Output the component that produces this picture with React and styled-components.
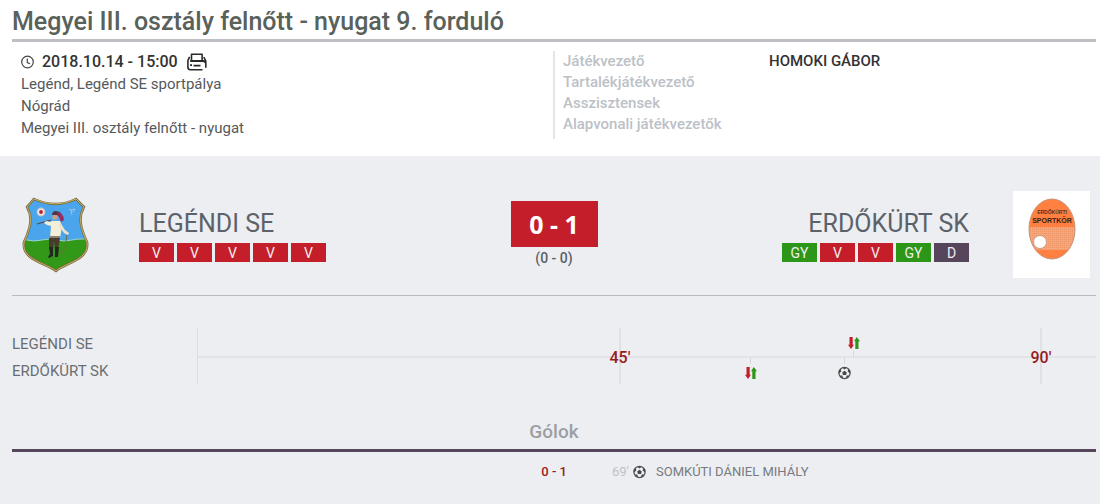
import React from 'react'
import styled, { createGlobalStyle } from 'styled-components'

const GlobalStyle = createGlobalStyle`
	* {
		box-sizing: border-box;
	}
	body {
		margin: 0;
		background-color: #edeef2;
		color: #5b6068;
		font-family: Roboto, "Liberation Sans", sans-serif;
	}
	h1, h2, h3, p, ul, dl, dd {
		margin: 0;
		padding: 0;
	}
	ul {
		list-style: none;
	}
`

const colors = {
	V: '#c41e2a',
	GY: '#2b9618',
	D: '#57455c',
}

const MatchHeader = styled.header`
	padding: 0 4px 17px 12px;
	background-color: #fff;
`
const Title = styled.h1`
	height: 42px;
	border-bottom: 3px solid #bfc0c5;
	color: #59615b;
	font-size: 25px;
	font-weight: 500;
	line-height: 43px;
`
const HeaderColumns = styled.div`
	display: grid;
	grid-template-columns: 1fr 1fr;
	padding-top: 9px;
`
const MatchInfo = styled.div`
	padding-left: 9px;
	color: #56595c;
	font-size: 15px;
	line-height: 22px;
`
const DateRow = styled.div`
	display: flex;
	align-items: center;
	gap: 8px;
	color: #333;

	& time {
		font-size: 16px;
		font-weight: 500;
	}
`
const Officials = styled.dl`
	display: grid;
	grid-template-columns: 206px 1fr;
	align-content: start;
	margin-left: -1px;
	padding-left: 8px;
	border-left: 2px solid #e4e5e8;
	font-size: 15px;
	font-weight: 500;
	line-height: 21px;

	& dt {
		color: #bcc1c7;
	}
	& dd {
		color: #333;
	}
`
const MatchBody = styled.main`
	padding: 0 4px 0 12px;
`
const Scoreboard = styled.section`
	display: grid;
	grid-template-columns: 1fr auto 1fr;
	height: 140px;
	border-bottom: 1px solid #b9bac1;
`
const Team = styled.div`
	display: flex;
	flex-direction: ${props => props.$away ? 'row-reverse' : 'row'};
	align-items: flex-start;
	gap: ${props => props.$away ? '44px' : '42px'};
	padding: ${props => props.$away ? '35px 6px 0 0' : '35px 0 0'};
`
const TeamText = styled.div`
	padding-top: 14px;
	text-align: ${props => props.$away ? 'right' : 'left'};

	& h2 {
		color: #5b6269;
		font-size: 25px;
		font-weight: 400;
		line-height: 38px;
		white-space: nowrap;
	}
`
const Form = styled.ul`
	display: flex;
	gap: 3px;
`
const FormItem = styled.li`
	width: 35px;
	height: 19px;
	background-color: ${props => colors[props.$result]};
	color: #f4eef0;
	font-size: 14px;
	line-height: 20px;
	text-align: center;
`
const Score = styled.div`
	padding-top: 45px;
	text-align: center;

	& strong {
		display: block;
		width: 87px;
		height: 46px;
		background-color: #c41e2a;
		color: #fff;
		font: 700 25px/47px "Noto Sans", sans-serif;
	}
	& span {
		font-size: 14px;
		font-weight: 500;
		line-height: 22px;
	}
`
const LogoBox = styled.div`
	display: flex;
	justify-content: center;
	width: 77px;
	height: 87px;
	background-color: #fff;
`
const TimelineSection = styled.section`
	display: grid;
	grid-template-columns: 185px 1fr;
	padding-top: 32px;
`
const TimelineTeams = styled.div`
	padding-top: 3px;
	color: #6a6e73;
	font-size: 15px;
	line-height: 27px;
`
const Track = styled.div`
	position: relative;
	height: 56px;
	border-left: 1px solid #dcdde0;

	&::before {
		content: '';
		position: absolute;
		top: 28px;
		left: 0;
		right: 0;
		height: 2px;
		background-color: #e2e3e6;
	}
`
const Mark = styled.div`
	position: absolute;
	top: 0;
	display: flex;
	justify-content: center;
	width: 24px;
	height: 56px;
	margin-left: -11px;
	background: linear-gradient(#e0e1e4, #e0e1e4) center / 2px 100% no-repeat;
	color: #981b20;
	font-size: 16px;
	font-weight: 500;
	line-height: 60px;
`
const Event = styled.div`
	position: absolute;
	top: ${props => props.$away ? '30px' : '8px'};
	display: flex;
	flex-direction: ${props => props.$away ? 'column' : 'column-reverse'};
	align-items: center;
	gap: ${props => props.$away ? '2px' : '1px'};
	width: 14px;
	margin-left: -6px;

	&::before {
		content: '';
		width: 1px;
		height: 6px;
		background-color: #d5d6d9;
	}
	& svg {
		display: block;
	}
`
const Goals = styled.section`
	padding-top: 30px;

	& h3 {
		height: 37px;
		border-bottom: 3px solid #57475d;
		color: #9b9fa4;
		font-size: 19px;
		font-weight: 500;
		line-height: 33px;
		text-align: center;
	}
`
const GoalRow = styled.div`
	display: grid;
	grid-template-columns: 1fr 1fr;
	align-items: center;
	padding: 9px 0 0 26px;
	color: #777b80;
	font-size: 13px;
	line-height: 22px;
`
const GoalScore = styled.div`
	text-align: right;
	color: #981b20;
	font-weight: 500;
`
const Scorer = styled.div`
	display: flex;
	align-items: center;
	padding-left: 45px;

	& time {
		width: 21px;
		color: #bcc1c7;
	}
	& span {
		padding-left: 10px;
	}
`

const ClockIcon = () => (
	<svg width="13" height="22" viewBox="0 0 13 22" fill="none" stroke="#444" strokeWidth="1.2">
		<circle cx="6.5" cy="11" r="5.8" />
		<path d="M6.3 7.4v4.2l2.7 1.2" />
	</svg>
)

const PrinterIcon = () => (
	<svg width="22" height="18" viewBox="0 0 22 18" fill="none" stroke="#2a2a2a" strokeWidth="1.6" strokeLinejoin="round">
		<path d="M5.5 7.5V1.2h10.6v6.3" />
		<path d="M3.6 3.8L1.9 7.6V14q0 2.7 2.6 2.7h12M17.8 4.2l2 4v6.6" />
		<path d="M4.2 8h13.6l1.4 1.4" strokeWidth="2" />
		<path d="M4 12.2h2M7.5 12.6h7" strokeWidth="1.7" />
	</svg>
)

const SwapIcon = () => (
	<svg width="12" height="14" viewBox="0 0 12 14">
		<path d="M1.5 1h3.2v7.7H6L3 13 0 8.7h1.5z" fill="#c41e2a" />
		<path d="M7.3 13h3.2V5.2H12L8.8 1 6 5.2h1.3z" fill="#2b9618" />
	</svg>
)

const BallIcon = () => (
	<svg width="13" height="14" viewBox="0 0 13 14">
		<circle cx="6.5" cy="7" r="5.6" fill="#edeef2" stroke="#555" strokeWidth="1.3" />
		<path d="M6.5 4.8l2.3 1.7-.8 2.5H5l-.8-2.5z" fill="#484848" />
		<path d="M4 1.6h5L6.500 3.400zM.8 5.100l1.500-2.300 1.100 2.400L1.100 7.600zM12.200 5.100l-1.500-2.300-1.100 2.400 2.300 2.400zM2 9.500l2.400.1.500 2.900-1.700-.8zM11 9.500l-2.400.1-.5 2.900 1.700-.8z" fill="#484848" />
	</svg>
)

const shieldPath = 'M22 5Q44 15 64 5L72 13C67 22 67 31 75 48C78 66 53 69 44 77C34 69 9 66 12 48C20 31 20 22 15 13Z'

const HomeCrest = () => (
	<svg width="85" height="83" viewBox="0 -3 85 83">
		<defs>
			<clipPath id="shield">
				<path d={shieldPath} />
			</clipPath>
		</defs>
		<g clipPath="url(#shield)">
			<path d="M0 0h85v48H0z" fill="#4ba5ed" />
			<path d="M0 46q8-2 15 0t15 0 15 0 15 0 25 0v35H0z" fill="#319818" />
			<path d="M0 46q8-2 15 0t15 0 15 0 15 0 25 0" fill="none" stroke="#9fd3cd" />
		</g>
		<path d={shieldPath} fill="none" stroke="#75693f" strokeWidth="2.4" />
		<path d={shieldPath} fill="none" stroke="#c9b568" strokeWidth="1" />
		<circle cx="29" cy="18" r="3.8" fill="#f3e6e6" stroke="#d3c9c4" strokeWidth="1.2" />
		<circle cx="29" cy="18" r="1.9" fill="#b52233" />
		<path d="M57 15l2 1 1 5M59 16l4-1-2 3" stroke="#a3c4dc" fill="none" />
		<path d="M25 30l14-4" stroke="#594b48" strokeWidth="1.2" />
		<path d="M40 27l8 0 2 6-2 11H38l1-12-4-1-3-2 2-2 4 1z" fill="#f2eed8" />
		<path d="M48 28l5 8 4 3-1 2-4-2-5-7" fill="#e9e3ce" />
		<path d="M55 41q0 10-6 21" fill="none" stroke="#6d7138" />
		<circle cx="43" cy="23" r="2.7" fill="#c9a086" />
		<path d="M40 21q0-4 4-4l4 1 2 4-3 1-2-2z" fill="#4c3945" />
		<path d="M45 18q6 0 7 8l-3 2-2-5z" fill="#9a2a62" />
		<path d="M38 42h10v2H38z" fill="#8d7f72" />
		<path d="M37 44h11l-2 11h-3l-1-8-1 8h-4z" fill="#483a2c" />
		<path d="M37 53h4v9l-4 2-1-1 2-3zM43 53h4l-1 10h-3z" fill="#252622" />
	</svg>
)

const AwayCrest = () => (
	<svg width="60" height="76" viewBox="0 0 60 76">
		<defs>
			<pattern id="weave" width="2" height="2" patternUnits="userSpaceOnUse">
				<path d="M0 0h2v2H0z" fill="#f5a67c" />
				<path d="M0 0h1v1H0z" fill="#ee9565" />
			</pattern>
			<clipPath id="oval">
				<ellipse cx="30" cy="38" rx="23" ry="30" />
			</clipPath>
		</defs>
		<g clipPath="url(#oval)">
			<path d="M0 0h60v76H0z" fill="#ff8040" />
			<path d="M0 36h60v23H0z" fill="url(#weave)" />
		</g>
		<ellipse cx="30" cy="38" rx="23" ry="30" fill="none" stroke="#c7947a" />
		<circle cx="18" cy="51" r="6.5" fill="#fff" stroke="#ce9c80" />
		<text x="30" y="23" textAnchor="middle" fontFamily="Liberation Sans" fontSize="5" fontWeight="700" fill="#59301c">ERDŐKÜRTI</text>
		<text x="30" y="32" textAnchor="middle" fontFamily="Liberation Sans" fontSize="7" fontWeight="700" fill="#3b1e12">SPORTKÖR</text>
	</svg>
)

const officials = ['Játékvezető', 'Tartalékjátékvezető', 'Asszisztensek', 'Alapvonali játékvezetők']

const events = [
	{ minute: 59, away: true, icon: <SwapIcon /> },
	{ minute: 69, away: true, icon: <BallIcon /> },
	{ minute: 70, away: false, icon: <SwapIcon /> },
]

// the track runs a little past the final whistle
const position = minute => `${minute / 96 * 100}%`

const FormList = ({ results }) => (
	<Form>
		{results.map((result, i) => <FormItem key={i} $result={result}>{result}</FormItem>)}
	</Form>
)

const App = () => {
	return (
		<>
			<GlobalStyle />
			<MatchHeader>
				<Title>Megyei III. osztály felnőtt - nyugat 9. forduló</Title>
				<HeaderColumns>
					<MatchInfo>
						<DateRow>
							<ClockIcon />
							<time dateTime="2018-10-14T15:00">2018.10.14 - 15:00</time>
							<PrinterIcon />
						</DateRow>
						<p>Legénd, Legénd SE sportpálya</p>
						<p>Nógrád</p>
						<p>Megyei III. osztály felnőtt - nyugat</p>
					</MatchInfo>
					<Officials>
						{officials.map((role, i) => (
							<React.Fragment key={role}>
								<dt>{role}</dt>
								<dd>{i === 0 && 'HOMOKI GÁBOR'}</dd>
							</React.Fragment>
						))}
					</Officials>
				</HeaderColumns>
			</MatchHeader>
			<MatchBody>
				<Scoreboard>
					<Team>
						<HomeCrest />
						<TeamText>
							<h2>LEGÉNDI SE</h2>
							<FormList results={['V', 'V', 'V', 'V', 'V']} />
						</TeamText>
					</Team>
					<Score>
						<strong>0 - 1</strong>
						<span>(0 - 0)</span>
					</Score>
					<Team $away>
						<LogoBox><AwayCrest /></LogoBox>
						<TeamText $away>
							<h2>ERDŐKÜRT SK</h2>
							<FormList results={['GY', 'V', 'V', 'GY', 'D']} />
						</TeamText>
					</Team>
				</Scoreboard>
				<TimelineSection>
					<TimelineTeams>
						<p>LEGÉNDI SE</p>
						<p>ERDŐKÜRT SK</p>
					</TimelineTeams>
					<Track>
						<Mark style={{ left: position(45) }}>45'</Mark>
						<Mark style={{ left: position(90) }}>90'</Mark>
						{events.map(event => (
							<Event key={event.minute} $away={event.away} style={{ left: position(event.minute) }}>
								{event.icon}
							</Event>
						))}
					</Track>
				</TimelineSection>
				<Goals>
					<h3>Gólok</h3>
					<GoalRow>
						<GoalScore>0 - 1</GoalScore>
						<Scorer>
							<time>69'</time>
							<BallIcon />
							<span>SOMKÚTI DÁNIEL MIHÁLY</span>
						</Scorer>
					</GoalRow>
				</Goals>
			</MatchBody>
		</>
	)
}

export default App
